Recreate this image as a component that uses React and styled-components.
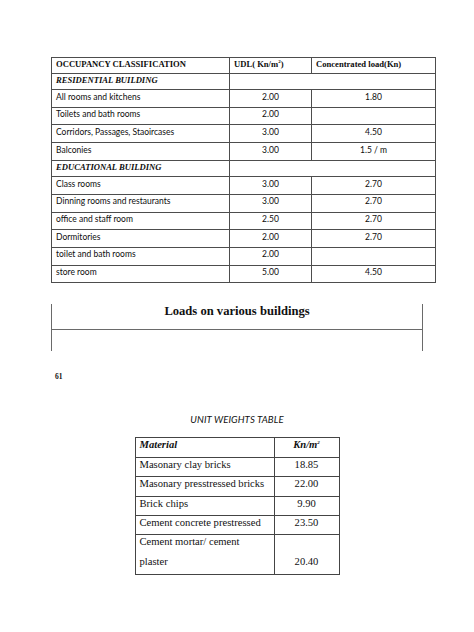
import React from "react";
import styled, { createGlobalStyle } from "styled-components";

const Global = createGlobalStyle`
  html, body { margin: 0; padding: 0; background: #fff; }
  body { width: 474px; height: 632px; overflow: hidden; color: #111; }
`;

const Page = styled.div`
  display: flex;
  flex-direction: column;
  width: 474px;
  padding-top: 57px;
`;

const LoadTable = styled.table`
  margin-left: 51px;
  width: 385px;
  border-collapse: collapse;
  table-layout: fixed;
`;

const Cell = styled.td`
  border: 1px solid #4d4d4d;
  height: ${(p) => p.$h || 16.7}px;
  padding: 0 4px;
  vertical-align: top;
  text-align: ${(p) => (p.$center ? "center" : "left")};
  font-family: ${(p) =>
    p.$serif ? '"Liberation Serif", "Times New Roman", serif' : 'Lato, "Noto Sans", sans-serif'};
  font-size: ${(p) => (p.$serif ? 8.6 : 8.5)}px;
  font-weight: ${(p) => (p.$bold ? 700 : 400)};
  font-style: ${(p) => (p.$italic ? "italic" : "normal")};
  line-height: 11px;
  padding-top: ${(p) => (p.$serif ? 1 : 1.5)}px;
  box-sizing: border-box;
  white-space: nowrap;
  color: #0d0d0d;
`;

const Sup = styled.sup`
  font-size: 5px;
  vertical-align: 4px;
  line-height: 0;
`;

const CaptionBox = styled.div`
  margin: 21px 51px 0;
  border-left: 1.5px solid #6a6a6a;
  border-right: 1.5px solid #6a6a6a;
  display: flex;
  flex-direction: column;
`;

const CaptionTitle = styled.div`
  height: 26px;
  border-bottom: 1.5px solid #6a6a6a;
  box-sizing: border-box;
  text-align: center;
  font-family: "Liberation Serif", "Times New Roman", serif;
  font-weight: 700;
  font-size: 12.6px;
  line-height: 15px;
  padding-top: 0;
`;

const CaptionSpace = styled.div`
  height: 21px;
`;

const PageNum = styled.div`
  margin: 21px 0 0 55px;
  font-family: "Liberation Serif", "Times New Roman", serif;
  font-weight: 700;
  font-size: 7.5px;
  line-height: 10px;
`;

const UnitTitle = styled.div`
  margin-top: 32px;
  text-align: center;
  font-family: Lato, "Noto Sans", sans-serif;
  font-style: italic;
  font-size: 9.6px;
  line-height: 12px;
  letter-spacing: 0.1px;
`;

const WeightTable = styled.table`
  margin: 11px auto 0;
  width: 205px;
  border-collapse: collapse;
  table-layout: fixed;
`;

const WCell = styled.td`
  border: 1px solid #444;
  height: ${(p) => p.$h || 19.4}px;
  box-sizing: border-box;
  padding: 1px 4px 0;
  vertical-align: ${(p) => (p.$bottom ? "bottom" : "top")};
  padding-bottom: ${(p) => (p.$bottom ? 6 : 0)}px;
  text-align: ${(p) => (p.$center ? "center" : "left")};
  font-family: "Liberation Serif", "Times New Roman", serif;
  font-size: 10.6px;
  font-weight: ${(p) => (p.$bold ? 700 : 400)};
  font-style: ${(p) => (p.$italic ? "italic" : "normal")};
  line-height: 12px;
  white-space: nowrap;
`;

const Lines = styled.div`
  display: flex;
  flex-direction: column;
  gap: 7.3px;
`;

const loads = [
  { section: "RESIDENTIAL BUILDING" },
  { name: "All rooms and kitchens", udl: "2.00", conc: "1.80" },
  { name: "Toilets and bath rooms", udl: "2.00", conc: "" },
  { name: "Corridors, Passages, Staoircases", udl: "3.00", conc: "4.50" },
  { name: "Balconies", udl: "3.00", conc: "1.5 / m" },
  { section: "EDUCATIONAL BUILDING" },
  { name: "Class rooms", udl: "3.00", conc: "2.70" },
  { name: "Dinning rooms and restaurants", udl: "3.00", conc: "2.70" },
  { name: "office and staff room", udl: "2.50", conc: "2.70" },
  { name: "Dormitories", udl: "2.00", conc: "2.70" },
  { name: "toilet and bath rooms", udl: "2.00", conc: "" },
  { name: "store room", udl: "5.00", conc: "4.50" },
];

const weights = [
  ["Masonary clay bricks", "18.85"],
  ["Masonary presstressed bricks", "22.00"],
  ["Brick chips", "9.90"],
  ["Cement concrete prestressed", "23.50"],
];

export default function App() {
  return (
    <>
      <Global />
      <Page>
        <LoadTable>
          <colgroup>
            <col style={{ width: 178 }} />
            <col style={{ width: 82 }} />
            <col style={{ width: 124 }} />
          </colgroup>
          <tbody>
            <tr>
              <Cell $serif $bold $h={15.7}>OCCUPANCY CLASSIFICATION</Cell>
              <Cell $serif $bold $h={15.7}>
                UDL( Kn/m<Sup>2</Sup>)
              </Cell>
              <Cell $serif $bold $h={15.7}>Concentrated load(Kn)</Cell>
            </tr>
            {loads.map((r, i) =>
              r.section ? (
                <tr key={i}>
                  <Cell $serif $bold $italic $h={16.4}>{r.section}</Cell>
                  <Cell colSpan={2} $h={16.4} />
                </tr>
              ) : (
                <tr key={i}>
                  <Cell $h={17.7}>{r.name}</Cell>
                  <Cell $center $h={17.7}>{r.udl}</Cell>
                  <Cell $center $h={17.7}>{r.conc}</Cell>
                </tr>
              )
            )}
          </tbody>
        </LoadTable>

        <CaptionBox>
          <CaptionTitle>Loads on various buildings</CaptionTitle>
          <CaptionSpace />
        </CaptionBox>

        <PageNum>61</PageNum>

        <UnitTitle>UNIT WEIGHTS TABLE</UnitTitle>

        <WeightTable>
          <colgroup>
            <col style={{ width: 139 }} />
            <col style={{ width: 65 }} />
          </colgroup>
          <tbody>
            <tr>
              <WCell $bold $italic>Material</WCell>
              <WCell $bold $italic $center>
                Kn/m<Sup>2</Sup>
              </WCell>
            </tr>
            {weights.map(([m, v]) => (
              <tr key={m}>
                <WCell>{m}</WCell>
                <WCell $center>{v}</WCell>
              </tr>
            ))}
            <tr>
              <WCell $h={39.4}>
                <Lines>
                  <span>Cement mortar/ cement</span>
                  <span>plaster</span>
                </Lines>
              </WCell>
              <WCell $h={39.4} $center $bottom>20.40</WCell>
            </tr>
          </tbody>
        </WeightTable>
      </Page>
    </>
  );
}
